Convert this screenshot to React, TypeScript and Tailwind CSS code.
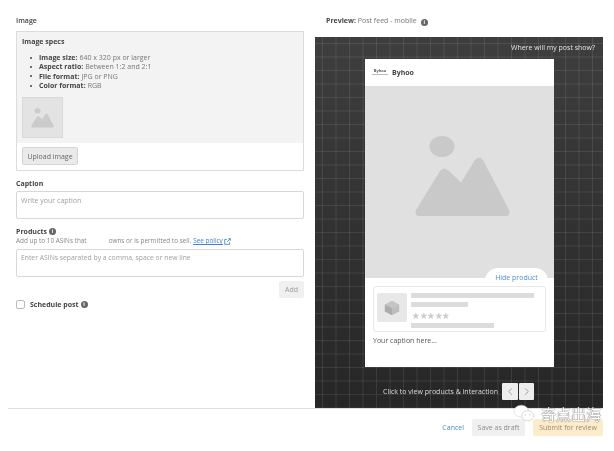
import React from 'react'

const font = "font-['Open_Sans','Noto_Sans',sans-serif]"

const InfoDot = () => (
  <span className="inline-flex h-[7px] w-[7px] items-center justify-center rounded-full bg-[#666] text-[5px] font-bold leading-none text-white">i</span>
)

const Mountain = ({ className }: { className: string }) => (
  <svg viewBox="0 0 95 81" className={className}>
    <ellipse cx="27" cy="10.5" rx="12.5" ry="10.5" fill="currentColor" />
    <path d="M1 74 L25 35 Q29 30 34 35 L46 46.5 L60 24 Q64 19 68 24 L94 74 Q96 80 90 80 L5 80 Q-1 80 1 74 Z" fill="currentColor" />
  </svg>
)

const Star = () => (
  <svg viewBox="0 0 20 20" className="h-[7.5px] w-[7.5px] text-[#cfcfcf]">
    <path d="M10 1 L12.8 7 L19 7.6 L14.3 12 L15.7 18.6 L10 15.2 L4.3 18.6 L5.7 12 L1 7.6 L7.2 7 Z" fill="currentColor" />
  </svg>
)

const Spec = ({ name, value }: { name: string; value: string }) => (
  <li className="flex h-[9.3px] items-center text-[7px] leading-none text-[#777]">
    <span className="mr-[7px] h-[2px] w-[2px] rounded-full bg-[#444]" />
    <span className="mr-[2px] font-bold text-[#444]">{name}</span>
    {value}
  </li>
)

export default function App() {
  return (
    <div className={`relative flex h-[451px] w-[614px] flex-col overflow-hidden bg-white blur-[0.4px] ${font}`}>
      <div className="flex h-[408px] shrink-0 pl-4">
        <div className="flex w-[288px] flex-col pt-[17px]">
          <div className="h-[14px] text-[7px] font-semibold leading-[8px] text-[#444]">Image</div>

          <div className="flex h-[140px] flex-col border border-[#dcdcdc]">
            <div className="h-[111px] bg-[#f3f3f3] px-[5px] pt-[5px]">
              <div className="text-[7px] font-bold leading-[10px] text-[#444]">Image specs</div>
              <ul className="mt-[6px] pl-[8px]">
                <Spec name="Image size:" value="640 x 320 px or larger" />
                <Spec name="Aspect ratio:" value="Between 1:2 and 2:1" />
                <Spec name="File format:" value="JPG or PNG" />
                <Spec name="Color format:" value="RGB" />
              </ul>
              <div className="mt-[7px] flex h-[41px] w-[41px] items-center justify-center border border-[#d8d8d8] bg-[#e3e3e3]">
                <Mountain className="h-[20px] w-[23px] text-[#cbcbcb]" />
              </div>
            </div>
            <div className="px-[5px] pt-[4px]">
              <button className="block h-[18px] w-[56px] rounded-[2px] border border-[#d5d5d5] bg-[#eaeaea] text-[7px] leading-none text-[#666]">Upload image</button>
            </div>
          </div>

          <div className="mt-[9px] h-[11px] text-[7px] font-bold leading-[8px] text-[#444]">Caption</div>
          <div className="h-[28px] rounded-[2px] border border-[#d8d8d8] px-[4px] pt-[4px] text-[7px] leading-[10px] text-[#a0a0a0]">Write your caption</div>

          <div className="mt-[8px] flex h-[9px] items-center gap-[2px] text-[7px] font-bold leading-none text-[#444]">
            Products <InfoDot />
          </div>
          <div className="mt-[1px] flex h-[9px] items-center text-[6.4px] leading-none text-[#888]">
            <span>Add up to 10 ASINs that</span>
            <span className="w-[22px]" />
            <span>owns or is permitted to sell.</span>
            <span className="ml-[2px] text-[#3f84c8] underline">See policy</span>
            <svg viewBox="0 0 10 10" className="ml-[1px] h-[7px] w-[7px] text-[#3f84c8]">
              <path d="M4 2H1v7h7V6M6 1h3v3M9 1 4.5 5.5" fill="none" stroke="currentColor" strokeWidth="1.2" />
            </svg>
          </div>
          <div className="mt-[3px] h-[28px] rounded-[2px] border border-[#d8d8d8] px-[4px] pt-[3px] text-[6.8px] leading-[10px] text-[#a0a0a0]">Enter ASINs separated by a comma, space or new line</div>

          <div className="mt-[4px] flex justify-end">
            <div className="flex h-[17px] w-[25px] items-center justify-center rounded-[2px] bg-[#f0f0f0] text-[7px] leading-none text-[#999]">Add</div>
          </div>

          <div className="mt-[2px] flex items-center">
            <span className="h-[9px] w-[9px] rounded-[2px] border border-[#bbb] bg-white" />
            <span className="ml-[5px] mr-[2px] text-[7px] font-bold leading-none text-[#444]">Schedule post</span>
            <InfoDot />
          </div>
        </div>

        <div className="ml-[11px] flex w-[288px] flex-col pt-[17px]">
          <div className="flex h-[20px] items-start gap-[4px] pl-[11px] text-[7px] leading-[8px] text-[#777]">
            <span><span className="font-bold text-[#444]">Preview:</span> Post feed - mobile</span>
            <span className="pt-[1px]"><InfoDot /></span>
          </div>

          <div className="relative flex-1 bg-[linear-gradient(to_right,rgba(255,255,255,0.09)_1px,transparent_1px),linear-gradient(to_bottom,rgba(255,255,255,0.09)_1px,transparent_1px),linear-gradient(to_bottom,#3e3e3e,#262626)] bg-size-[13.5px_13.5px,13.5px_13.5px,100%_100%] bg-position-[7px_6px,7px_6px,0_0] pt-[22px]">
            <div className="absolute right-[8px] top-[6px] text-[7px] font-medium leading-[9px] text-[#e4e4e4]">Where will my post show?</div>

            <div className="ml-[50px] flex h-[308px] w-[189px] flex-col bg-white">
              <div className="flex h-[27px] shrink-0 items-center pl-[7px]">
                <div className="flex h-[9px] w-[16px] flex-col items-center justify-start text-[4px] font-bold leading-[5px] text-[#555]">
                  Byhoo
                  <span className="mt-[1px] h-px w-full bg-[#bbb]" />
                </div>
                <span className="ml-[4px] text-[7px] font-bold leading-none text-[#444]">Byhoo</span>
              </div>

              <div className="relative flex h-[192px] shrink-0 items-center justify-center bg-[#e0e0e0]">
                <Mountain className="-mt-[12px] ml-[6px] h-[81px] w-[95px] text-[#c9c9c9]" />
                <div className="absolute -bottom-[8px] right-[6px] flex h-[18px] w-[63px] items-center justify-center rounded-t-[13px] bg-white pt-[1px] text-[7px] leading-none text-[#4a8fd6]">Hide product</div>
              </div>

              <div className="flex flex-1 flex-col px-[8px] pt-[8px]">
                <div className="flex h-[46px] rounded-[3px] border border-[#e8e8e8] pl-[3px] pt-[6px]">
                  <div className="flex h-[29px] w-[30px] items-center justify-center rounded-[2px] bg-[#e8e8e8]">
                    <svg viewBox="0 0 20 20" className="h-[18px] w-[18px]">
                      <path d="M10 2 18 6 10 10 2 6Z" fill="#c4c4c4" />
                      <path d="M2 6 10 10V18L2 14Z" fill="#acacac" />
                      <path d="M18 6 10 10V18L18 14Z" fill="#bdbdbd" />
                    </svg>
                  </div>
                  <div className="ml-[4px] flex w-[124px] flex-col">
                    <div className="h-[5px] w-[123px] bg-[#dcdcdc]" />
                    <div className="mt-[4px] h-[5px] w-[57px] bg-[#dcdcdc]" />
                    <div className="mt-[5px] ml-[1px] flex">
                      <Star /><Star /><Star /><Star /><Star />
                    </div>
                    <div className="mt-[3px] h-[5px] w-[83px] bg-[#dcdcdc]" />
                  </div>
                </div>
                <div className="mt-[4px] text-[7px] leading-[10px] text-[#555]">Your caption here...</div>
              </div>
            </div>

            <div className="mt-[16px] flex h-[17px] items-center pl-[68px]">
              <span className="w-[119px] whitespace-nowrap text-[7px] font-normal leading-none text-[#ddd]">Click to view products &amp; interaction</span>
              <div className="flex gap-px">
                <div className="flex h-[17px] w-[16px] items-center justify-center rounded-[1px] bg-[#eee] text-[#999]">
                  <svg viewBox="0 0 10 10" className="h-[9px] w-[9px]"><path d="M6.5 1.5 3 5l3.5 3.5" fill="none" stroke="currentColor" strokeWidth="1" /></svg>
                </div>
                <div className="flex h-[17px] w-[15px] items-center justify-center rounded-[1px] bg-[#eee] text-[#999]">
                  <svg viewBox="0 0 10 10" className="h-[9px] w-[9px]"><path d="M3.5 1.5 7 5 3.5 8.5" fill="none" stroke="currentColor" strokeWidth="1" /></svg>
                </div>
              </div>
            </div>
          </div>
        </div>
      </div>

      <div className="ml-2 h-px w-[595px] shrink-0 bg-[#ddd]" />

      <div className="flex items-center justify-end pr-[11px] pt-[10px]">
        <span className="mr-[8px] text-[7px] leading-none text-[#4a8fc8]">Cancel</span>
        <div className="flex h-[17px] w-[53px] items-center justify-center rounded-[2px] bg-[#f0f0f0] text-[7px] leading-none text-[#8a8a8a]">Save as draft</div>
        <div className="ml-[8px] flex h-[17px] w-[70px] items-center justify-center rounded-[2px] bg-[#fdeccc] text-[7px] leading-none text-[#9a8c70]">Submit for review</div>
      </div>

      {/* watermark */}
      <div className="absolute left-[513px] top-[403px] flex items-start gap-[6px]">
        <svg viewBox="0 0 24 20" className="h-[20px] w-[22px]">
          <ellipse cx="9" cy="8" rx="8" ry="6.5" fill="white" stroke="#c4c4c4" strokeWidth="0.5" />
          <ellipse cx="16" cy="13" rx="6.5" ry="5.5" fill="white" stroke="#b0b0b0" strokeWidth="0.5" />
          <circle cx="13.5" cy="12" r="0.7" fill="#bbb" />
          <circle cx="18.5" cy="12" r="0.7" fill="#bbb" />
        </svg>
        <span className="mt-[3px] font-['Noto_Sans_CJK_SC',sans-serif] text-[15px] leading-none text-white [text-shadow:0_0_1px_#555,0_0_1px_#555]">奇点出海</span>
      </div>
    </div>
  )
}
